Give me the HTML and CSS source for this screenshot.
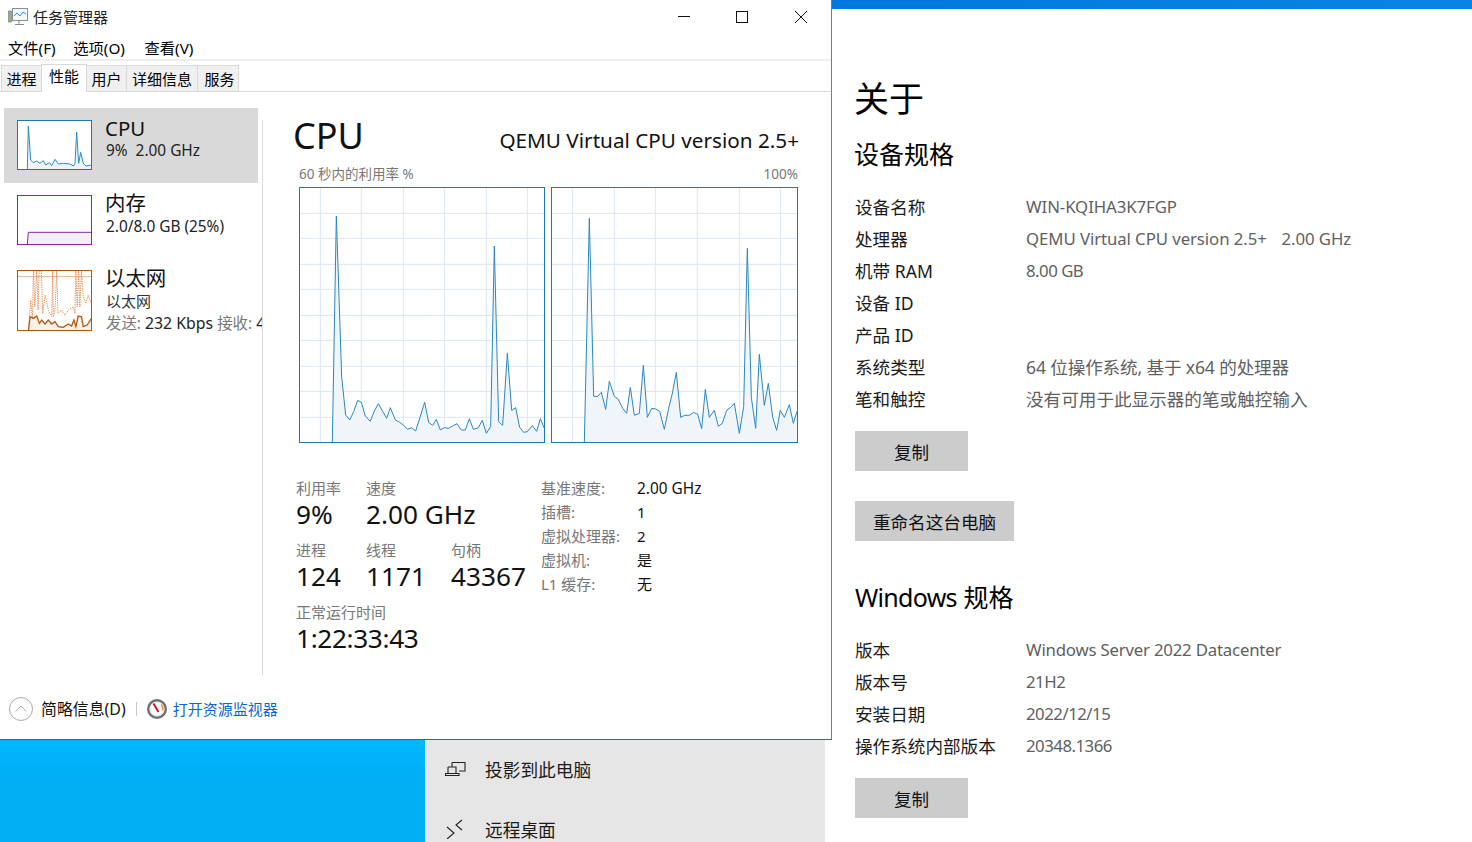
FILE: index.html
```html
<!DOCTYPE html>
<html lang="zh-CN">
<head>
<meta charset="utf-8">
<title>任务管理器</title>
<link rel="stylesheet" href="styles.css">
</head>
<body>
<div class="backdrop">
  <div class="wall"></div>
  <div class="quick">
    <div class="quick-row">
      <svg class="quick-icon" viewBox="0 0 22 16"><path d="M7 1.500h13v8.500h-6M7 1.500v4M3 6h8v6.500M3 6v6.500M0.500 12.500h13.500v2h-13.500z"/></svg>
      <span>投影到此电脑</span>
    </div>
    <div class="quick-row">
      <svg class="quick-icon" viewBox="0 0 22 20"><path d="M2 8l7 6-7 6M17 1l-6 5 6 5"/></svg>
      <span>远程桌面</span>
    </div>
  </div>
</div>

<main class="settings">
  <div class="settings-strip"></div>
  <div class="settings-body">
    <h1 class="about">关于</h1>
    <h2 class="spec-title">设备规格</h2>
    <dl class="specs">
      <dt>设备名称</dt><dd class="lat">WIN-KQIHA3K7FGP</dd>
      <dt>处理器</dt><dd class="lat">QEMU Virtual CPU version 2.5+&nbsp;&nbsp; <span class="ghz">2.00 GHz</span></dd>
      <dt>机带 RAM</dt><dd class="lat dig">8.00 GB</dd>
      <dt>设备 ID</dt><dd></dd>
      <dt>产品 ID</dt><dd></dd>
      <dt>系统类型</dt><dd class="mix">64 位操作系统, 基于 x64 的处理器</dd>
      <dt>笔和触控</dt><dd>没有可用于此显示器的笔或触控输入</dd>
    </dl>
    <button class="btn btn-copy">复制</button>
    <button class="btn btn-rename">重命名这台电脑</button>
    <h2 class="spec-title win-title"><span class="win-word">Windows</span> 规格</h2>
    <dl class="specs">
      <dt>版本</dt><dd class="lat num">Windows Server 2022 Datacenter</dd>
      <dt>版本号</dt><dd class="lat dig">21H2</dd>
      <dt>安装日期</dt><dd class="lat dig">2022/12/15</dd>
      <dt>操作系统内部版本</dt><dd class="lat dig">20348.1366</dd>
    </dl>
    <button class="btn btn-copy">复制</button>
  </div>
</main>

<section class="taskmgr">
  <header class="titlebar">
    <svg class="app-icon" viewBox="0 0 20 18">
      <rect class="ai-screen" x="4.500" y="0.500" width="15" height="12"/>
      <path class="ai-line" d="M6 8l3-3 3 3 3-4 3 2"/>
      <rect class="ai-side" x="0.500" y="3" width="3" height="11"/>
      <path class="ai-base" d="M11 13v2.500M7 16.500h9"/>
    </svg>
    <span class="app-title">任务管理器</span>
    <div class="win-controls">
      <svg viewBox="0 0 12 12"><path d="M0 5.500h12"/></svg>
      <svg viewBox="0 0 12 12"><rect x="0.500" y="0.500" width="11" height="11"/></svg>
      <svg viewBox="0 0 12 12"><path d="M0 0l12 12M12 0L0 12"/></svg>
    </div>
  </header>
  <nav class="menubar">
    <span>文件(F)</span><span>选项(O)</span><span>查看(V)</span>
  </nav>
  <nav class="tabs">
    <span class="tab t1">进程</span>
    <span class="tab active">性能</span>
    <span class="tab t3">用户</span>
    <span class="tab t4">详细信息</span>
    <span class="tab t5">服务</span>
  </nav>
  <div class="perf">
    <aside class="sidebar">
      <div class="item selected">
        <svg class="thumb thumb-cpu" viewBox="51 360 225 150">
          <polygon class="cpu-fill" points="82,508 85,378 92,480 100,488 110,483 120,490 130,482 137,495 148,488 155,497 165,478 175,492 190,490 210,492 220,498 225,490 230,396 236,490 242,457 250,490 258,498 275,495 275,508"/>
          <polyline class="cpu-line" points="82,508 85,378 92,480 100,488 110,483 120,490 130,482 137,495 148,488 155,497 165,478 175,492 190,490 210,492 220,498 225,490 230,396 236,490 242,457 250,490 258,498 275,495"/>
        </svg>
        <div class="item-text">
          <div class="item-name">CPU</div>
          <div class="item-sub">9%&nbsp; 2.00 GHz</div>
        </div>
      </div>
      <div class="item">
        <svg class="thumb thumb-mem" viewBox="51 45 225 150">
          <polygon class="mem-fill" points="82,193 85,157 275,157 275,193"/>
          <polyline class="mem-line" points="82,193 85,157 275,157"/>
        </svg>
        <div class="item-text">
          <div class="item-name">内存</div>
          <div class="item-sub">2.0/8.0 GB (25%)</div>
        </div>
      </div>
      <div class="item">
        <svg class="thumb thumb-net" viewBox="51 269 225 184">
          <path class="net-grid" d="M52 289h223"/>
          <polyline class="net-dot" points="85,450 92,360 97,420 100,272 104,380 110,272 114,390 117,272 124,272 128,400 135,345 145,390 155,410 158,272 160,410 165,390 170,272 174,400 185,390 195,405 205,390 220,380 225,400 228,272 232,380 236,272 240,380 245,272 250,345 258,370 265,345 275,370"/>
          <polygon class="net-fill" points="85,450 90,410 100,415 110,408 118,430 125,420 135,432 145,420 155,432 165,425 175,440 190,442 205,432 215,438 222,420 228,440 235,408 245,410 250,440 262,435 275,415 275,451"/>
          <polyline class="net-line" points="85,450 90,410 100,415 110,408 118,430 125,420 135,432 145,420 155,432 165,425 175,440 190,442 205,432 215,438 222,420 228,440 235,408 245,410 250,440 262,435 275,415"/>
        </svg>
        <div class="item-text">
          <div class="item-name">以太网</div>
          <div class="item-sub muted-sub">以太网</div>
          <div class="item-sub net-rate"><i>发送:</i> 232 Kbps <i>接收:</i> 4</div>
        </div>
      </div>
    </aside>
    <div class="vsep"></div>
    <div class="detail">
      <div class="detail-head">
        <div class="detail-title">CPU</div>
        <div class="detail-model">QEMU Virtual CPU version 2.5+</div>
      </div>
      <div class="chart-caption"><span>60 秒内的利用率 %</span><span>100%</span></div>
      <div class="charts">
        <svg class="chart" viewBox="27 21 738 768">
          <path class="grid" d="M91 22V787M214 22V787M340 22V787M463 22V787M589 22V787M712 22V787M28 100H763M28 175H763M28 253H763M28 328H763M28 406H763M28 481H763M28 559H763M28 634H763M28 712H763"/>
          <polygon class="area" points="127,786 139,108 155,590 167,705 179,720 191,695 203,661 214,667 226,708 241,724 253,693 265,671 278,694 290,715 301,683 316,720 328,726 340,735 353,748 365,743 377,753 390,712 404,667 416,727 428,736 439,718 451,750 463,743 475,745 488,738 501,731 514,750 526,750 538,716 550,748 565,743 577,721 589,760 602,740 613,198 626,725 638,736 652,520 665,691 677,683 689,742 701,757 712,755 727,737 740,754 751,716 763,745 763,786"/>
          <polyline class="line" points="127,786 139,108 155,590 167,705 179,720 191,695 203,661 214,667 226,708 241,724 253,693 265,671 278,694 290,715 301,683 316,720 328,726 340,735 353,748 365,743 377,753 390,712 404,667 416,727 428,736 439,718 451,750 463,743 475,745 488,738 501,731 514,750 526,750 538,716 550,748 565,743 577,721 589,760 602,740 613,198 626,725 638,736 652,520 665,691 677,683 689,742 701,757 712,755 727,737 740,754 751,716 763,745"/>
        </svg>
        <svg class="chart" viewBox="18 21 741 768">
          <path class="grid" d="M82 22V787M208 22V787M331 22V787M457 22V787M583 22V787M706 22V787M19 100H757M19 175H757M19 253H757M19 328H757M19 406H757M19 481H757M19 559H757M19 634H757M19 712H757"/>
          <polygon class="area" points="118,786 133,115 146,649 158,649 169,637 182,688 193,604 208,649 220,658 233,685 245,700 256,622 268,706 283,700 295,556 307,712 320,685 332,687 344,694 358,748 371,685 382,640 394,577 407,712 419,706 433,706 446,697 458,703 470,746 481,628 493,712 508,691 520,739 532,730 545,691 557,682 568,670 583,760 596,680 607,205 619,652 632,745 643,523 658,676 670,610 683,712 695,751 706,691 718,712 733,674 745,730 756,694 756,786"/>
          <polyline class="line" points="118,786 133,115 146,649 158,649 169,637 182,688 193,604 208,649 220,658 233,685 245,700 256,622 268,706 283,700 295,556 307,712 320,685 332,687 344,694 358,748 371,685 382,640 394,577 407,712 419,706 433,706 446,697 458,703 470,746 481,628 493,712 508,691 520,739 532,730 545,691 557,682 568,670 583,760 596,680 607,205 619,652 632,745 643,523 658,676 670,610 683,712 695,751 706,691 718,712 733,674 745,730 756,694"/>
        </svg>
      </div>
      <div class="stats">
        <div class="stats-left">
          <div class="stat-row">
            <div class="stat s1"><label>利用率</label><b>9%</b></div>
            <div class="stat"><label>速度</label><b>2.00 GHz</b></div>
          </div>
          <div class="stat-row">
            <div class="stat s1"><label>进程</label><b>124</b></div>
            <div class="stat s2"><label>线程</label><b>1171</b></div>
            <div class="stat"><label>句柄</label><b>43367</b></div>
          </div>
          <div class="stat-row">
            <div class="stat"><label>正常运行时间</label><b class="uptime">1:22:33:43</b></div>
          </div>
        </div>
        <dl class="props">
          <dt>基准速度:</dt><dd class="prop-lat">2.00 GHz</dd>
          <dt>插槽:</dt><dd>1</dd>
          <dt>虚拟处理器:</dt><dd>2</dd>
          <dt>虚拟机:</dt><dd>是</dd>
          <dt>L1 缓存:</dt><dd>无</dd>
        </dl>
      </div>
    </div>
  </div>
  <footer class="footer">
    <svg class="chev" viewBox="0 0 24 24"><circle cx="12" cy="12" r="11.500"/><path d="M6.500 14.500L12 9l5.500 5.500"/></svg>
    <span class="brief">简略信息(D)</span>
    <span class="foot-sep"></span>
    <svg class="gauge" viewBox="0 0 20 20">
      <circle class="g-ring" cx="10" cy="10" r="8.800"/>
      <circle class="g-face" cx="10" cy="10" r="7"/>
      <path class="g-arc" d="M14 5.500a6 6 0 0 1 1.500 6"/>
      <path class="g-needle" d="M6.500 4.500L11.500 13"/>
    </svg>
    <a class="monitor-link">打开资源监视器</a>
  </footer>
</section>
</body>
</html>
```

FILE: styles.css
```css
* { box-sizing: border-box; }
html, body { margin: 0; padding: 0; }
body {
  width: 1472px;
  height: 842px;
  overflow: hidden;
  position: relative;
  background: #fff;
  color: #000;
  font-family: "Noto Sans", "Noto Sans CJK SC", sans-serif;
}

/* Desktop behind the windows */
.backdrop {
  position: absolute;
  left: 0;
  top: 737px;
  width: 825px;
  height: 105px;
  display: flex;
}
.wall { width: 425px; background: linear-gradient(180deg, #00b8ff, #00aef4 40%); }
.quick { flex: 1; background: #e6e6e6; padding-left: 20px; }
.quick-row {
  height: 60px;
  display: flex;
  align-items: center;
  font-size: 17.7px;
  color: #1a1a1a;
  padding-top: 3px;
}
.quick-icon { width: 22px; height: 20px; margin-right: 18px; fill: none; stroke: #222; stroke-width: 1.1; }

/* Settings window */
.settings {
  position: absolute;
  left: 832px;
  top: 0;
  width: 640px;
  height: 842px;
  background: #fff;
}
.settings-strip { height: 9px; background: linear-gradient(90deg, #0078dc, #0a84e4); }
.settings-body { padding: 0 0 0 23px; }
.about { margin: 0 0 0 -1px; padding-top: 67px; height: 112px; font-size: 35px; line-height: 46px; font-weight: 400; }
.spec-title { margin: 0; font-size: 25px; line-height: 34px; font-weight: 400; padding-top: 16px; height: 70px; }
.spec-title:not(.win-title) { margin-left: -1px; }
.win-title { height: auto; padding: 39px 0 0; margin-bottom: 20px; }
.win-word { letter-spacing: -0.7px; }
.specs {
  margin: 0;
  display: grid;
  grid-template-columns: 171px 1fr;
  grid-auto-rows: 32px;
  font-size: 17.6px;
  line-height: 32px;
}
.specs dt { color: #1a1a1a; white-space: nowrap; }
.specs dd { margin: 0; color: #5f5f5f; white-space: nowrap; }
.specs .lat { font-size: 16.8px; letter-spacing: -0.08px; }
.specs .num { letter-spacing: -0.2px; }
.specs .dig { letter-spacing: -0.5px; }
.specs .mix { letter-spacing: -0.15px; }
.ghz { margin-left: 2px; }
.btn {
  display: block;
  height: 40px;
  border: 0;
  padding: 0;
  background: #ccc;
  font: inherit;
  font-size: 17.6px;
  color: #111;
  margin-top: 16px;
}
.btn-copy { width: 113px; }
.btn-rename { width: 159px; margin-top: 30px; }

/* Task Manager window */
.taskmgr {
  position: absolute;
  left: 0;
  top: 0;
  width: 832px;
  height: 740px;
  background: #fff;
  border-right: 1px solid #7a7a7a;
  border-bottom: 1px solid #53616b;
  display: flex;
  flex-direction: column;
}
.titlebar { height: 33px; display: flex; align-items: center; padding-left: 8px; font-size: 15px; }
.app-icon { width: 20px; height: 18px; margin-right: 5px; }
.ai-screen { fill: #f4f8fb; stroke: #8a8f94; }
.ai-line { fill: none; stroke: #2f8fd0; }
.ai-side { fill: #8fb08a; stroke: #777; stroke-width: .6; }
.ai-base { fill: none; stroke: #888; stroke-width: 1.2; }
.app-title { color: #222; }
.win-controls { margin-left: auto; display: flex; align-items: center; gap: 47px; padding-right: 24px; }
.win-controls svg { width: 12px; height: 12px; fill: none; stroke: #111; stroke-width: 1; display: block; }
.win-controls svg:first-child { margin-right: -1px; }
.menubar {
  height: 28px;
  display: flex;
  align-items: center;
  gap: 17.5px;
  padding: 1px 0 0 8px;
  font-size: 15.3px;
  border-bottom: 2px solid #f0f0f0;
}
.menubar span:last-child { margin-left: 2px; }
.tabs {
  height: 31px;
  display: flex;
  align-items: flex-end;
  padding-left: 1px;
  border-bottom: 1px solid #d9d9d9;
  font-size: 15px;
}
.tab {
  height: 26px;
  background: #f0f0f0;
  border: 1px solid #d9d9d9;
  border-bottom: 0;
  margin-left: -1px;
  display: flex;
  align-items: center;
  justify-content: center;
  padding-top: 1px;
  line-height: 1;
}
.t1 { width: 41px; margin-left: 0; }
.t3 { width: 41px; }
.t4 { width: 72px; }
.t5 { width: 42px; padding-left: 3px; }
.tab.active {
  width: 46px;
  height: 28px;
  background: #fff;
  position: relative;
  top: 1px;
  padding: 0 0 4px;
  z-index: 1;
}
.perf { height: 598px; display: flex; }
.sidebar {
  width: 262px;
  margin-top: 16px;
  height: 240px;
  padding-left: 4px;
  overflow: hidden;
  flex: none;
}
.vsep { width: 1px; height: 555px; margin-top: 28px; background: #dcdcdc; flex: none; }
.sidebar .item { width: 254px; height: 75px; display: flex; padding: 12px 0 0 13px; }
.item.selected { background: #d9d9d9; }
.thumb { width: 75px; height: 50px; flex: none; margin-right: 13px; overflow: hidden; }
.item:nth-child(3) .thumb { height: 61px; }
.thumb-cpu { background: #fff; outline: 1px solid #1a7ab0; outline-offset: -1px; }
.thumb-mem { background: #fff; outline: 1px solid #8b24ae; outline-offset: -1px; }
.thumb-net { background: #fff; outline: 1px solid #a65a10; outline-offset: -1px; }
.cpu-fill { fill: #eef4f9; }
.cpu-line { fill: none; stroke: #2a8cc8; stroke-width: 3; }
.mem-fill { fill: #f3f0f5; }
.mem-line { fill: none; stroke: #8b24ae; stroke-width: 3; }
.net-grid { stroke: #e4b48c; stroke-width: 3; fill: none; }
.net-dot { fill: none; stroke: #e88a50; stroke-width: 3; stroke-dasharray: 4 3; }
.net-fill { fill: #f8efe8; }
.net-line { fill: none; stroke: #b05a10; stroke-width: 4; }
.item-text { white-space: nowrap; margin-top: -3px; }
.item-name { font-size: 20.4px; line-height: 24px; color: #111; margin-top: -1px; }
.item-sub { font-size: 15.4px; line-height: 22px; color: #222; margin-left: 1px; }
.item:nth-child(n+2) .item-sub { margin-top: 1px; }
.item .muted-sub { font-size: 15px; line-height: 21px; color: #333; }
.item .net-rate { line-height: 20px; font-size: 15.8px; margin-top: 0; }
.net-rate i { font-style: normal; color: #777; font-size: 15.4px; }

.detail { flex: 1; padding: 20px 33px 0 30px; }
.detail-head { display: flex; align-items: flex-end; justify-content: space-between; height: 50px; }
.detail-title { font-size: 36px; line-height: 50px; color: #111; margin-bottom: 1px; }
.detail-model { font-size: 20.7px; line-height: 34px; color: #111; margin-bottom: 5px; margin-right: -1px; }
.chart-caption {
  display: flex;
  justify-content: space-between;
  font-size: 13.5px;
  line-height: 20px;
  color: #777;
  padding: 0 0 0 6px;
  margin-top: 2px;
}
.charts { display: flex; gap: 6px; padding-left: 6px; margin-top: 3px; }
.chart { width: 246px; height: 256px; flex: none; outline: 1px solid #1a7ab0; outline-offset: -1px; background: #fff; }
.chart + .chart { width: 247px; }
.grid { fill: none; stroke: #d9e6f2; stroke-width: 3; }
.area { fill: #f0f5fa; }
.line { fill: none; stroke: #2a86c4; stroke-width: 3; stroke-linejoin: round; }
.stats { display: flex; margin-top: 34px; padding-left: 3px; }
.stats-left { width: 245px; flex: none; }
.stat-row { display: flex; height: 62px; }
.stat { display: flex; flex-direction: column; white-space: nowrap; }
.stat label { font-size: 15px; line-height: 20px; padding-top: 1px; color: #777; }
.stat b { font-size: 26.2px; font-weight: 400; line-height: 30px; margin-top: 1px; color: #111; }
.stat .uptime { letter-spacing: -0.35px; }
.s1 { width: 70px; }
.s2 { width: 85px; }
.props {
  margin: -1px 0 0;
  display: grid;
  grid-template-columns: 96px 1fr;
  grid-auto-rows: 24px;
  line-height: 24px;
  font-size: 15px;
  align-self: flex-start;
}
.props dt { color: #777; }
.props dd { margin: 0; color: #111; }
.props .prop-lat { font-size: 15.4px; padding-top: 1px; }

.footer { flex: 1; display: flex; align-items: center; padding: 0 0 12px 9px; font-size: 15px; }
.chev { width: 24px; height: 24px; fill: none; stroke: #aaa; stroke-width: 1; margin-right: 8px; }
.brief { color: #111; font-size: 15.9px; }
.foot-sep { width: 1px; height: 14px; background: #c8c8c8; margin: 0 10px; }
.gauge { width: 20px; height: 20px; margin-right: 6px; }
.g-ring { fill: #fff; stroke: #6f6f6f; stroke-width: 2.400; }
.g-face { fill: #fafafa; stroke: #ccc; stroke-width: .6; }
.g-arc { fill: none; stroke: #e8963c; stroke-width: 1.400; }
.g-needle { fill: none; stroke: #c01020; stroke-width: 1.800; }
.monitor-link { color: #0a66cc; }
```
